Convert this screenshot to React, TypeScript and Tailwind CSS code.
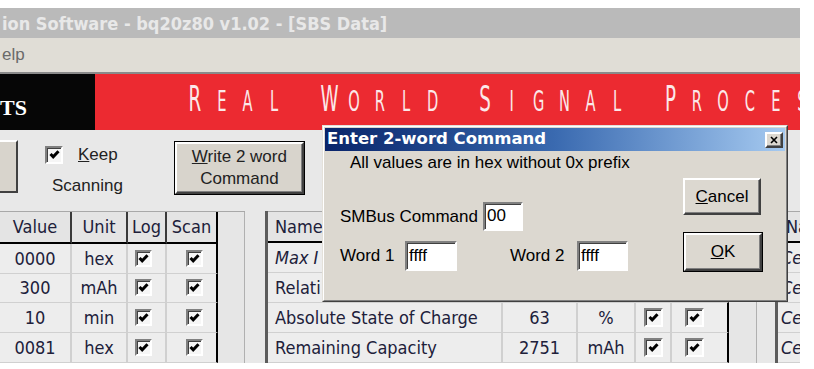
import React from 'react';

const sans = "font-['Liberation_Sans',Arial,sans-serif]";
const grid = "font-['DejaVu_Sans_Condensed','DejaVu_Sans',sans-serif]";
const raised =
  'border-2 border-t-white border-l-white border-r-[#404040] border-b-[#404040] shadow-[inset_-1px_-1px_0_#808080]';
const sunken =
  'border-2 border-t-[#808080] border-l-[#808080] border-r-white border-b-white shadow-[inset_1px_1px_0_#404040]';

const Tick = ({ size = 17 }: { size?: number }) => (
  <div
    className={`flex items-center justify-center bg-[#f6f6f6] ${sunken}`}
    style={{ width: size, height: size }}
  >
    <svg width="11" height="11" viewBox="0 0 11 11">
      <path d="M1.5 5 L4.2 7.8 L9.5 2.2" fill="none" stroke="#000" strokeWidth="3" />
    </svg>
  </div>
);

const banner = 'REAL WORLD SIGNAL PROCES'.split('');

const leftRows = [
  ['0000', 'hex'],
  ['300', 'mAh'],
  ['10', 'min'],
  ['0081', 'hex'],
];

const rightRows = [
  ['Max I', '', ''],
  ['Relati', '', ''],
  ['Absolute State of Charge', '63', '%'],
  ['Remaining Capacity', '2751', 'mAh'],
];

const LeftGrid = () => (
  <div className={`flex flex-col w-[245px] shrink-0 border-t border-[#a8a8a8] ${grid} text-[18px] text-[#20203a]`}>
    <div className="flex h-[32px]">
      <div className="w-[72px] shrink-0 border-r-2 border-b-2 border-r-[#3a3a3a] border-b-black flex items-center justify-center bg-[#e4e4e4]">
        Value
      </div>
      <div className="w-[56px] shrink-0 border-r-2 border-b-2 border-r-[#3a3a3a] border-b-black flex items-center justify-center bg-[#e4e4e4]">
        Unit
      </div>
      <div className="w-[39px] shrink-0 border-r-2 border-b-2 border-r-[#3a3a3a] border-b-black flex items-center justify-center bg-[#e4e4e4]">
        Log
      </div>
      <div className="w-[51px] shrink-0 border-r-2 border-b-2 border-black flex items-center justify-center bg-[#e4e4e4]">
        Scan
      </div>
      <div className="flex-1 border-r border-[#b0b0b0] bg-[#e6e6e6]" />
    </div>
    {leftRows.map(([v, u]) => (
      <div key={v} className="flex h-[30px]">
        <div className="w-[72px] shrink-0 border-r-2 border-b border-[#d0d0d0] flex items-center justify-center bg-[#ededed]">
          {v}
        </div>
        <div className="w-[56px] shrink-0 border-r-2 border-b border-[#d0d0d0] flex items-center justify-center bg-[#ededed]">
          {u}
        </div>
        <div className="w-[39px] shrink-0 border-r-2 border-b border-[#d0d0d0] flex items-center justify-center bg-[#ededed] pr-[6px]">
          <Tick />
        </div>
        <div className="w-[51px] shrink-0 border-r-2 border-r-black border-b border-b-[#d0d0d0] flex items-center justify-center bg-[#ededed] pl-[6px]">
          <Tick />
        </div>
        <div className="flex-1 border-r border-[#b0b0b0] bg-[#e6e6e6]" />
      </div>
    ))}
  </div>
);

const RightGrid = () => (
  <div className={`flex flex-col w-[492px] shrink-0 border-l-[3px] border-[#5c5c5c] ${grid} text-[18px] text-[#20203a]`}>
    <div className="flex h-[32px] border-t border-[#a8a8a8]">
      <div className="w-[235px] shrink-0 border-r-2 border-b-2 border-r-[#3a3a3a] border-b-black flex items-center pl-[7px] bg-[#e4e4e4]">
        Name
      </div>
      <div className="w-[75px] shrink-0 border-r-2 border-b-2 border-r-[#3a3a3a] border-b-black bg-[#e4e4e4]" />
      <div className="w-[58px] shrink-0 border-r-2 border-b-2 border-r-[#3a3a3a] border-b-black bg-[#e4e4e4]" />
      <div className="w-[36px] shrink-0 border-r-2 border-b-2 border-r-[#3a3a3a] border-b-black bg-[#e4e4e4]" />
      <div className="w-[57px] shrink-0 border-r-2 border-b-2 border-black bg-[#e4e4e4]" />
      <div className="flex-1 border-r border-[#b0b0b0] bg-[#e6e6e6]" />
    </div>
    {rightRows.map(([n, v, u], i) => (
      <div key={n} className="flex h-[30px]">
        <div
          className={`w-[235px] shrink-0 border-r-2 border-b border-[#d0d0d0] flex items-center pl-[7px] bg-[#ededed] ${
            i === 0 ? 'italic' : ''
          }`}
        >
          {n}
        </div>
        <div className="w-[75px] shrink-0 border-r-2 border-b border-[#d0d0d0] flex items-center justify-center bg-[#ededed]">
          {v}
        </div>
        <div className="w-[58px] shrink-0 border-r-2 border-b border-[#d0d0d0] flex items-center justify-center bg-[#ededed]">
          {u}
        </div>
        <div className="w-[36px] shrink-0 border-r-2 border-b border-[#d0d0d0] flex items-center justify-center bg-[#ededed]">
          <Tick size={19} />
        </div>
        <div className="w-[57px] shrink-0 border-r-2 border-r-black border-b border-b-[#d0d0d0] flex items-center justify-center bg-[#ededed] pr-[10px]">
          <Tick size={19} />
        </div>
        <div className="flex-1 border-r border-[#b0b0b0] bg-[#e6e6e6]" />
      </div>
    ))}
  </div>
);

const ThirdGrid = () => (
  <div className={`flex flex-col w-[40px] shrink-0 border-l-[3px] border-[#5c5c5c] ${grid} text-[18px] text-[#20203a]`}>
    <div className="h-[32px] border-t border-[#a8a8a8] border-b-2 border-b-black bg-[#e4e4e4] flex items-center pl-[8px]">
      Na
    </div>
    {[0, 1, 2, 3].map((k) => (
      <div key={k} className="h-[30px] border-b border-[#d0d0d0] bg-[#ededed] flex items-center pl-[3px] italic">
        Ce
      </div>
    ))}
  </div>
);

const Dialog = () => (
  <div className="absolute left-[322px] top-[125px] w-[466px] h-[177px] border border-t-[#e4e1da] border-l-[#e4e1da] border-r-[#404040] border-b-[#404040] bg-[#dcd8d0]">
    <div className="h-full border border-t-white border-l-white border-r-[#808080] border-b-[#808080] p-px flex flex-col">
      <div className="h-[23px] bg-linear-to-r from-[#0a246a] via-[#3a6ab0] to-[#a6caf0] flex items-center justify-between pl-[2px] pr-[2px]">
        <span className="font-['DejaVu_Sans',sans-serif] font-bold text-[16.5px] text-white leading-none">
          Enter 2-word Command
        </span>
        <div className={`w-[18px] h-[16px] bg-[#dcd8d0] ${raised} flex items-center justify-center`}>
          <svg width="8" height="8" viewBox="0 0 8 8">
            <path d="M1 1 L7 7 M7 1 L1 7" stroke="#000" strokeWidth="1.6" />
          </svg>
        </div>
      </div>
      <div className={`flex ${sans} text-[17px] text-black`}>
        <div className="w-[356px] flex flex-col">
          <div className="ml-[25px] mt-[2px] leading-[20px]">All values are in hex without 0x prefix</div>
          <div className="flex items-center ml-[15px] mt-[29px] h-[29px]">
            <span className="w-[143px]">SMBus Command</span>
            <div className={`w-[40px] h-[29px] bg-white ${sunken} pl-[2px] leading-[24px]`}>00</div>
          </div>
          <div className="flex items-center ml-[15px] mt-[10px] h-[30px]">
            <span className="w-[65px]">Word 1</span>
            <div className={`w-[52px] h-[30px] bg-white ${sunken} pl-[2px] leading-[25px]`}>ffff</div>
            <span className="w-[67px] ml-[53px]">Word 2</span>
            <div className={`w-[51px] h-[30px] bg-white ${sunken} pl-[2px] leading-[25px]`}>ffff</div>
          </div>
        </div>
        <div className="flex flex-col ml-[2px]">
          <div className={`mt-[27px] w-[78px] h-[37px] bg-[#dcd8d0] ${raised} flex items-center justify-center`}>
            <span>
              <span className="underline">C</span>ancel
            </span>
          </div>
          <div className="mt-[17px] w-[80px] h-[40px] border border-black">
            <div className={`w-full h-full bg-[#dcd8d0] ${raised} flex items-center justify-center`}>
              <span>
                <span className="underline">O</span>K
              </span>
            </div>
          </div>
        </div>
      </div>
    </div>
  </div>
);

export default function App() {
  return (
    <div className="relative w-[814px] h-[369px] bg-white overflow-hidden">
      <div className="w-[800px] flex flex-col overflow-hidden">
        <div className="h-[8px] bg-white" />
        <div className="h-[30px] bg-[#bababa] flex items-center pl-[2px]">
          <span className="font-['DejaVu_Sans_Condensed','DejaVu_Sans',sans-serif] font-bold text-[18px] text-[#e8e8e8] whitespace-nowrap">
            ion Software - bq20z80 v1.02 - [SBS Data]
          </span>
        </div>
        <div className={`h-[36px] bg-[#e0ddd6] border-b-2 border-[#8a8a8a] flex items-center pl-[2px] ${sans} text-[17px] text-[#6a6a6a]`}>
          elp
        </div>
        <div className="h-[56px] flex">
          <div className="w-[95px] shrink-0 bg-[#060606] pt-[23px]">
            <span className="font-['Liberation_Serif',serif] font-bold text-[22px] leading-none text-white">TS</span>
          </div>
          <div className="flex-1 bg-[#ec2a31] pl-[87px] pt-[8px] flex items-baseline overflow-hidden">
            {banner.map((c, i) => {
              const big = i === 0 || banner[i - 1] === ' ';
              return (
                <span key={i} className="w-[26.4px] shrink-0 text-center leading-none">
                  <span
                    className={`inline-block scale-x-[0.58] font-['DejaVu_Sans_Condensed','DejaVu_Sans',sans-serif] font-normal text-[#fbe8e9] ${
                      big ? 'text-[35px]' : 'text-[28px]'
                    }`}
                  >
                    {c === ' ' ? '\u00a0' : c}
                  </span>
                </span>
              );
            })}
          </div>
        </div>
        <div className={`h-[81px] bg-[#e8e8e8] flex items-start ${sans} text-[17px] text-[#222]`}>
          <div className="mt-[10px] w-[18px] h-[53px] shrink-0 bg-[#d8d4cc] border-r-2 border-b-2 border-t-2 border-t-white border-r-[#404040] border-b-[#404040]" />
          <div className="ml-[27px] mt-[12px] flex flex-col">
            <div className="flex items-center">
              <Tick size={18} />
              <span className="ml-[15px]">
                <span className="underline">K</span>eep
              </span>
            </div>
            <span className="ml-[7px] mt-[5px]">Scanning</span>
          </div>
          <div className="ml-[51px] mt-[11px] w-[131px] h-[54px] border border-black">
            <div className={`w-full h-full bg-[#d8d4cc] ${raised} flex flex-col items-center justify-center leading-[22px]`}>
              <span>
                <span className="underline">W</span>rite 2 word
              </span>
              <span>Command</span>
            </div>
          </div>
        </div>
        <div className="h-[152px] bg-[#e8e8e8] flex">
          <LeftGrid />
          <div className="w-[20px] shrink-0" />
          <RightGrid />
          <div className="w-[18px] shrink-0" />
          <ThirdGrid />
        </div>
      </div>
      <Dialog />
    </div>
  );
}
